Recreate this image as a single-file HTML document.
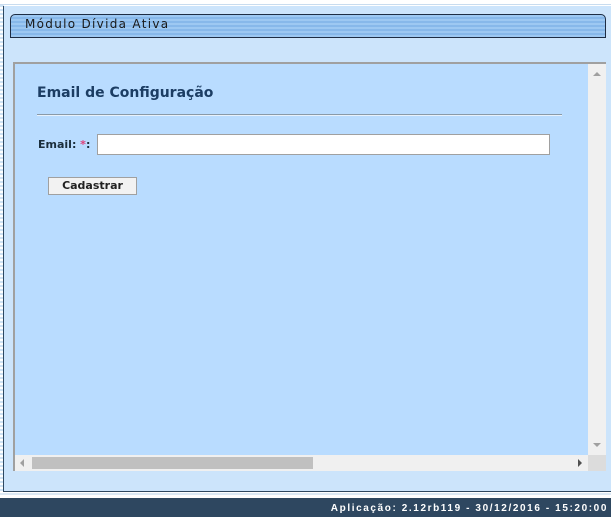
<!DOCTYPE html>
<html><head><meta charset="utf-8"><style>
*{margin:0;padding:0;box-sizing:border-box}
body{width:611px;height:517px;overflow:hidden;background:#fff;font-family:"DejaVu Sans","Liberation Sans",sans-serif;position:relative}
.stripe{position:absolute;left:0;top:5px;width:4px;height:487px;background:repeating-linear-gradient(#cfe3f5 0 2px,#fff 2px 4px)}
.top{position:absolute;left:0;top:0;width:611px;height:5px;background:#fff;border-bottom:1px solid #c8dcef}
.panel{position:absolute;left:3px;top:6px;width:608px;height:486px;background:#cce4fb;border-left:1px solid #2e4760;border-bottom:1px solid #2e4760}
.tab{position:absolute;left:10px;top:14px;width:596px;height:24px;border:1px solid #1e2d44;border-radius:5px 5px 0 0;background:repeating-linear-gradient(#9dc8f2 0 2px,#87b8ea 2px 4px);font-size:12px;letter-spacing:1.3px;color:#1a1a1a;padding:2px 0 0 14px}
.frame{position:absolute;left:13px;top:62px;width:593px;height:409px;background:#b9dcff;border-top:2px solid #a0a0a0;border-left:2px solid #a0a0a0}
.vs{position:absolute;left:588px;top:64px;width:18px;height:391px;background:#f0f0f0}
.hs{position:absolute;left:15px;top:455px;width:573px;height:16px;background:#f0f0f0}
.thumb{position:absolute;left:17px;top:2px;width:281px;height:12px;background:#c0c0c0}
.corner{position:absolute;left:588px;top:455px;width:18px;height:16px;background:#dcdcdc}
h1{position:absolute;left:37px;top:85px;font-size:14px;font-weight:bold;color:#1c3d63}
.hr{position:absolute;left:37px;top:114px;width:525px;height:2px;background:#8a9aa8;border-bottom:1px solid #e8f2fc}
.lbl{position:absolute;left:38px;top:138px;font-size:11px;font-weight:bold;color:#1a2e3c}
.lbl span{color:#e0407a}
.inp{position:absolute;left:97px;top:134px;width:453px;height:21px;background:#fff;border:1px solid #a0a0a0}
.btn{position:absolute;left:48px;top:177px;width:89px;height:18px;background:#f2f2f2;border:1px solid #a0a0a0;font-size:11px;font-weight:bold;color:#222;text-align:center;line-height:16px}
.foot{position:absolute;left:0;top:498px;width:611px;height:19px;background:#2e4760;color:#fff;font-size:10px;font-weight:bold;letter-spacing:1.6px;text-align:right;padding:5px 3px 0 0;font-family:"Liberation Sans",sans-serif}
.fl{position:absolute;left:0;top:492px;width:611px;height:6px;background:linear-gradient(#fff 0 1px,#dce9f5 1px 3px,#fff 3px 6px)}
</style></head><body>
<div class="top"></div>
<div class="stripe"></div>
<div class="panel"></div>
<div class="tab">Módulo Dívida Ativa</div>
<div class="frame"></div>
<div class="vs"><div style="position:absolute;left:5px;top:8px;border:4px solid transparent;border-bottom:4px solid #a0a0a0;border-top:0"></div><div style="position:absolute;left:5px;bottom:8px;border:4px solid transparent;border-top:4px solid #a0a0a0;border-bottom:0"></div></div>
<div class="hs"><div style="position:absolute;left:5px;top:4px;border:4px solid transparent;border-right:4px solid #a0a0a0;border-left:0"></div><div class="thumb"></div><div style="position:absolute;right:6px;top:4px;border:4px solid transparent;border-left:4px solid #505050;border-right:0"></div></div>
<div class="corner"></div>
<h1>Email de Configuração</h1>
<div class="hr"></div>
<div class="lbl">Email: <span>*</span>:</div>
<div class="inp"></div>
<div class="btn">Cadastrar</div>
<div class="fl"></div>
<div class="foot">Aplicação: 2.12rb119 - 30/12/2016 - 15:20:00</div>
</body></html>
